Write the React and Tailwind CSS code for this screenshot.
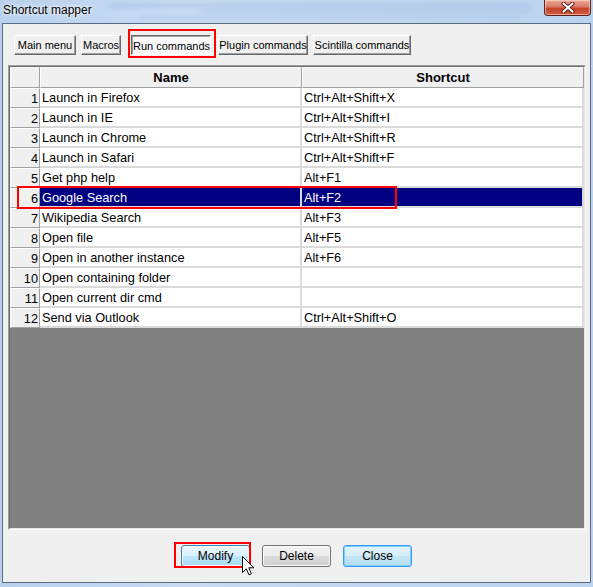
import React from "react";

const rows = [
  ["Launch in Firefox", "Ctrl+Alt+Shift+X"],
  ["Launch in IE", "Ctrl+Alt+Shift+I"],
  ["Launch in Chrome", "Ctrl+Alt+Shift+R"],
  ["Launch in Safari", "Ctrl+Alt+Shift+F"],
  ["Get php help", "Alt+F1"],
  ["Google Search", "Alt+F2"],
  ["Wikipedia Search", "Alt+F3"],
  ["Open file", "Alt+F5"],
  ["Open in another instance", "Alt+F6"],
  ["Open containing folder", ""],
  ["Open current dir cmd", ""],
  ["Send via Outlook", "Ctrl+Alt+Shift+O"],
];

function Tab({ label, w, ml, pressed }) {
  return (
    <div
      className={
        "h-[20px] flex items-center justify-center whitespace-nowrap text-[11px] text-black border " +
        (pressed
          ? "border-t-[#696969] border-l-[#696969] border-b-white border-r-white bg-[#f9f9f9] shadow-[inset_1px_1px_0_#a0a0a0] pt-[2px] pl-[1px]"
          : "border-t-white border-l-white border-b-[#696969] border-r-[#696969] bg-[#f0f0f0] shadow-[inset_-1px_-1px_0_#a0a0a0]")
      }
      style={{ width: w, marginLeft: ml }}
    >
      {label}
    </div>
  );
}

function WinButton({ label, kind }) {
  let cls =
    "w-[69px] h-[22px] rounded-[3px] border flex items-center justify-center text-[12px] text-black ";
  if (kind === "hover")
    cls +=
      "border-[#3c7fb1] bg-[linear-gradient(#eaf6fd_0%,#d9f0fc_50%,#bee6fd_50%,#a7d9f5_100%)] shadow-[inset_0_0_0_1px_#f4fbff]";
  else if (kind === "default")
    cls +=
      "border-[#3399ff] bg-[linear-gradient(#e5f4fc_0%,#d3edfa_50%,#c4e5f6_50%,#b6ddf3_100%)] shadow-[inset_0_0_0_1px_#7fd0f7]";
  else
    cls +=
      "border-[#707070] bg-[linear-gradient(#f2f2f2_0%,#ebebeb_50%,#dddddd_50%,#cfcfcf_100%)] shadow-[inset_0_0_0_1px_#fbfbfb]";
  return <div className={cls}>{label}</div>;
}

export default function App() {
  return (
    <div className="relative w-[593px] h-[587px] overflow-hidden flex flex-col bg-[linear-gradient(90deg,#b9d1ee,#c8dbf2_30%,#c2d7f0_70%,#bcd3ee)] font-['Liberation_Sans',Arial,sans-serif]">
      {/* title bar */}
      <div className="relative h-[23px] shrink-0">
        <div className="absolute left-[110px] top-[4px] w-[420px] h-[3px] bg-[#9db8e0] blur-[2px] opacity-70" />
        <div className="absolute left-[200px] top-[10px] w-[330px] h-[3px] bg-[#a3bde3] blur-[2px] opacity-60" />
        <div className="absolute left-[140px] top-[16px] w-[380px] h-[3px] bg-[#a9c2e6] blur-[2px] opacity-60" />
        <div className="relative pl-[3px] pt-[3px] text-[12px] leading-[14px] text-black [text-shadow:0_0_6px_#ffffff,0_0_3px_#ffffff]">
          Shortcut mapper
        </div>
        <div className="absolute left-[544px] top-0 w-[47px] h-[16px] rounded-b-[4px] border border-t-0 border-[#5e221a] bg-[linear-gradient(#eba999_0%,#d77a66_45%,#c7452d_55%,#d0583c_100%)] shadow-[inset_0_0_0_1px_rgba(255,220,210,0.6)] flex items-center justify-center">
          <svg width="14" height="11" viewBox="0 0 14 11">
            <path d="M2.5 1.5 L11.5 9.5 M11.5 1.5 L2.5 9.5" stroke="#5a1a12" strokeWidth="4" strokeLinecap="round" />
            <path d="M2.5 1.5 L11.5 9.5 M11.5 1.5 L2.5 9.5" stroke="#ffffff" strokeWidth="2.2" strokeLinecap="round" />
          </svg>
        </div>
      </div>

      {/* client area */}
      <div className="mx-[2px] h-[560px] shrink-0 border border-[#5a6b82] bg-[#f0f0f0] flex flex-col">
        {/* tabs */}
        <div className="flex pt-[11px]">
          <Tab label="Main menu" w={62} ml={11} />
          <Tab label="Macros" w={40} ml={5} />
          <Tab label="Run commands" w={80} ml={10} pressed />
          <Tab label="Plugin commands" w={90} ml={7} />
          <Tab label="Scintilla commands" w={98} ml={5} />
        </div>

        {/* grid */}
        <div className="ml-[5px] mt-[10px] w-[578px] h-[465px] border border-t-[#a0a0a0] border-l-[#a0a0a0] border-b-white border-r-white">
          <div className="w-full h-full border border-t-[#696969] border-l-[#696969] border-b-[#e3e3e3] border-r-[#e3e3e3] flex flex-col bg-[#808080] text-[12.75px] text-black">
            {/* header */}
            <div className="flex h-[21px] shrink-0 bg-[#d8d8d8]">
              <div className="w-[30px] border border-t-white border-l-white border-b-[#a0a0a0] border-r-[#a0a0a0] bg-[#f0f0f0]" />
              <div className="w-[262px] border border-t-white border-l-white border-b-[#a0a0a0] border-r-[#a0a0a0] bg-[#f0f0f0] flex items-center justify-center font-bold text-[13px]">
                Name
              </div>
              <div className="flex-1 border border-t-white border-l-white border-b-[#a0a0a0] border-r-[#a0a0a0] bg-[#f0f0f0] flex items-center justify-center font-bold text-[13px]">
                Shortcut
              </div>
            </div>
            {/* rows */}
            {rows.map(([name, sc], i) => {
              const sel = i === 5;
              const cell =
                "h-[20px] border-b-2 border-r-2 border-[#dadada] pl-[2px] leading-[20px] whitespace-nowrap overflow-hidden " +
                (sel ? "bg-[#000080] text-white" : "bg-white");
              return (
                <div key={i} className="flex h-[20px] shrink-0">
                  <div className="w-[30px] h-[20px] border border-t-white border-l-white border-b-[#a0a0a0] border-r-[#a0a0a0] bg-[#f0f0f0] text-right pr-[1px] leading-[19px]">
                    {i + 1}
                  </div>
                  <div className={"w-[262px] " + cell}>{name}</div>
                  <div className={"flex-1 " + cell}>{sc}</div>
                </div>
              );
            })}
            <div className="flex-1 bg-[#808080]" />
          </div>
        </div>

        {/* buttons */}
        <div className="flex justify-center gap-[12px] mt-[15px]">
          <WinButton label="Modify" kind="hover" />
          <WinButton label="Delete" />
          <WinButton label="Close" kind="default" />
        </div>
      </div>

      {/* annotation boxes */}
      <div className="absolute left-[128px] top-[29px] w-[88px] h-[29px] border-2 border-[#ff0000]" />
      <div className="absolute left-[17px] top-[186px] w-[380px] h-[23px] border-2 border-[#ff0000]" />
      <div className="absolute left-[174px] top-[542px] w-[77px] h-[26px] border-2 border-[#ff0000]" />

      {/* mouse cursor */}
      <svg className="absolute left-[242px] top-[556px]" width="13" height="20" viewBox="0 0 13 20">
        <path d="M0.5 0.5 L0.5 16.5 L4.3 12.8 L7 18.8 L9.4 17.8 L6.8 11.8 L11.8 11.8 Z" fill="#ffffff" stroke="#000000" strokeWidth="1" strokeLinejoin="miter" />
      </svg>
    </div>
  );
}
